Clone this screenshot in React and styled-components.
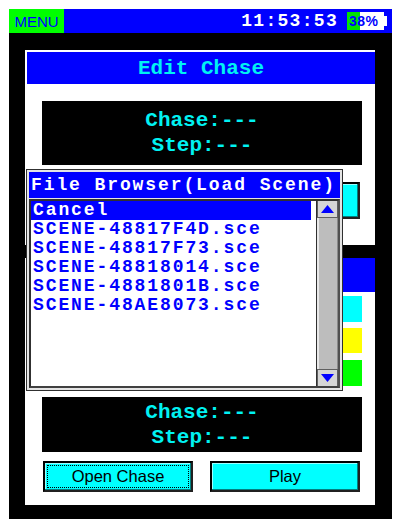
import React from "react";
import styled, { createGlobalStyle } from "styled-components";

const GlobalStyle = createGlobalStyle`
	html, body {
		margin: 0;
		padding: 0;
		background: #fff;
	}
	body {
		padding: 9px;
		font-family: "Liberation Mono", monospace;
	}
`;

const BLUE = "#0000ff";
const CYAN = "#00f2f2";

const Device = styled.div`
	width: 383px;
	background: #000;
`;

const StatusBar = styled.div`
	display: flex;
	align-items: center;
	height: 24px;
	background: ${BLUE};
	padding-right: 5px;
`;

const MenuTag = styled.div`
	display: flex;
	align-items: center;
	justify-content: center;
	width: 55px;
	height: 100%;
	background: #00ff00;
	color: ${BLUE};
	font-family: "Liberation Sans", Arial, sans-serif;
	font-size: 15px;
	padding-top: 1px;
	box-sizing: border-box;
`;

const Clock = styled.div`
	margin-left: auto;
	color: #fff;
	font-family: "Liberation Mono", monospace;
	font-weight: bold;
	font-size: 18px;
	letter-spacing: 1.3px;
	line-height: 24px;
`;

const Battery = styled.div`
	display: flex;
	align-items: center;
	margin-left: 9px;
`;

const BatteryBody = styled.div`
	width: 37px;
	height: 18px;
	background: linear-gradient(to right, #00e000 0 13px, #fff 13px);
	color: ${BLUE};
	font-family: "Liberation Sans", Arial, sans-serif;
	font-weight: bold;
	font-size: 14px;
	line-height: 18px;
	padding-left: 2px;
	box-sizing: border-box;
	letter-spacing: 0.5px;
`;

const BatteryNub = styled.div`
	width: 3px;
	height: 10px;
	background: #fff;
`;

const Frame = styled.div`
	position: relative;
	display: flex;
	flex-direction: column;
	gap: 13px;
	padding: 17px 17px 14px 16px;
`;

const Panel = styled.div`
	display: flex;
	flex-direction: column;
	background: #fff;
	height: ${(p) => p.$height}px;
	box-sizing: border-box;
	padding-top: ${(p) => p.$top || 0}px;
`;

const Header = styled.div`
	margin-left: 2px;
	height: ${(p) => p.$height}px;
	background: ${BLUE};
	color: ${CYAN};
	font-weight: bold;
	font-size: 21px;
	display: flex;
	align-items: center;
	justify-content: center;
	padding-top: 1px;
	box-sizing: border-box;
`;

const Display = styled.div`
	margin: ${(p) => p.$gap}px 13px 0 17px;
	height: ${(p) => p.$height}px;
	background: #000;
	color: ${CYAN};
	font-weight: bold;
	font-size: 21px;
	line-height: ${(p) => p.$line}px;
	display: flex;
	flex-direction: column;
	align-items: center;
	justify-content: center;
`;

const ButtonRow = styled.div`
	display: flex;
	justify-content: space-between;
	margin: ${(p) => p.$gap}px 15px 0 18px;
	height: ${(p) => p.$height}px;
`;

const Button = styled.div`
	width: 150px;
	height: 100%;
	box-sizing: border-box;
	background: #00ffff;
	border: 2px solid #000;
	border-right-color: #202020;
	border-bottom-color: #202020;
	box-shadow: inset -1px -1px 0 #008080, inset 1px 1px 0 #9ff;
	display: flex;
	align-items: center;
	justify-content: center;
	font-family: "Liberation Sans", Arial, sans-serif;
	font-size: 16.5px;
	color: #000;
	padding: 2px;
`;

const FocusRing = styled.div`
	flex: 1;
	align-self: stretch;
	display: flex;
	align-items: center;
	justify-content: center;
	border: 1px dotted ${(p) => (p.$on ? "#000" : "transparent")};
`;

const SwatchRow = styled.div`
	display: flex;
	justify-content: flex-end;
	margin: ${(p) => p.$gap}px 13px 0 0;
`;

const Swatch = styled.div`
	width: 19px;
	height: ${(p) => p.$height}px;
	background: ${(p) => p.$color};
`;

/* file browser popup, laid over the chase editor */
const Dialog = styled.div`
	position: absolute;
	left: 17px;
	top: 136px;
	width: 317px;
	height: 222px;
	box-sizing: border-box;
	border: 1px solid #303030;
	padding: 2px;
	background: #e4e4e4;
	display: flex;
	flex-direction: column;
	gap: 1px;
`;

const DialogTitle = styled.div`
	height: 26px;
	background: ${BLUE};
	color: #fff;
	font-weight: bold;
	font-size: 18px;
	letter-spacing: 1.9px;
	line-height: 26px;
	padding-left: 2px;
	white-space: nowrap;
	overflow: hidden;
`;

const ListBox = styled.div`
	flex: 1;
	display: flex;
	background: #fff;
	border: 2px solid #303030;
	border-right-color: #505050;
	border-bottom-color: #404040;
	min-height: 0;
`;

const Rows = styled.div`
	flex: 1;
	padding-right: 5px;
`;

const Row = styled.div`
	height: 19px;
	line-height: 19px;
	padding-left: 2px;
	font-weight: bold;
	font-size: 18px;
	letter-spacing: 1.9px;
	white-space: nowrap;
	color: ${(p) => (p.$selected ? "#fff" : BLUE)};
	background: ${(p) => (p.$selected ? BLUE : "transparent")};
`;

const ScrollBar = styled.div`
	width: 21px;
	display: flex;
	flex-direction: column;
	border-left: 1px solid #303030;
	background: #bdbdbd;
`;

const ScrollButton = styled.div`
	height: 16px;
	background: #d6d6d6;
	border: 1px solid #606060;
	${(p) => (p.$down ? "border-bottom: none;" : "border-top: none;")}
	display: flex;
	align-items: center;
	justify-content: center;
`;

const Track = styled.div`
	flex: 1;
	border-left: 2px solid #e8e8e8;
	border-right: 1px solid #8a8a8a;
`;

const Arrow = ({ down }) => (
	<svg width="13" height="8" viewBox="0 0 13 8">
		<polygon points={down ? "0,0 13,0 6.5,8" : "0,8 13,8 6.5,0"} fill={BLUE} />
	</svg>
);

const files = [
	"SCENE-48817F4D.sce",
	"SCENE-48817F73.sce",
	"SCENE-48818014.sce",
	"SCENE-4881801B.sce",
	"SCENE-48AE8073.sce",
];

const ChaseInfo = () => (
	<>
		<div>Chase:---</div>
		<div>Step:---</div>
	</>
);

export default function App() {
	return (
		<>
			<GlobalStyle />
			<Device>
				<StatusBar>
					<MenuTag>MENU</MenuTag>
					<Clock>11:53:53</Clock>
					<Battery>
						<BatteryBody>38%</BatteryBody>
						<BatteryNub />
					</Battery>
				</StatusBar>

				<Frame>
					<Panel $height={195} $top={2}>
						<Header $height={32}>Edit Chase</Header>
						<Display $gap={17} $height={64} $line={25}>
							<ChaseInfo />
						</Display>
						<ButtonRow $gap={17} $height={37}>
							<Button />
							<Button />
						</ButtonRow>
					</Panel>

					<Panel $height={247}>
						<Header $height={34} />
						<SwatchRow $gap={4}>
							<Swatch $color="#00ffff" $height={26} />
						</SwatchRow>
						<SwatchRow $gap={6}>
							<Swatch $color="#ffff00" $height={25} />
						</SwatchRow>
						<SwatchRow $gap={7}>
							<Swatch $color="#00ff00" $height={26} />
						</SwatchRow>
						<Display $gap={11} $height={55} $line={25}>
							<ChaseInfo />
						</Display>
						<ButtonRow $gap={9} $height={31}>
							<Button>
								<FocusRing $on>Open Chase</FocusRing>
							</Button>
							<Button>
								<FocusRing>Play</FocusRing>
							</Button>
						</ButtonRow>
					</Panel>

					<Dialog>
						<DialogTitle>File Browser(Load Scene)</DialogTitle>
						<ListBox>
							<Rows>
								<Row $selected>Cancel</Row>
								{files.map((f) => (
									<Row key={f}>{f}</Row>
								))}
							</Rows>
							<ScrollBar>
								<ScrollButton>
									<Arrow />
								</ScrollButton>
								<Track />
								<ScrollButton $down>
									<Arrow down />
								</ScrollButton>
							</ScrollBar>
						</ListBox>
					</Dialog>
				</Frame>
			</Device>
		</>
	);
}
